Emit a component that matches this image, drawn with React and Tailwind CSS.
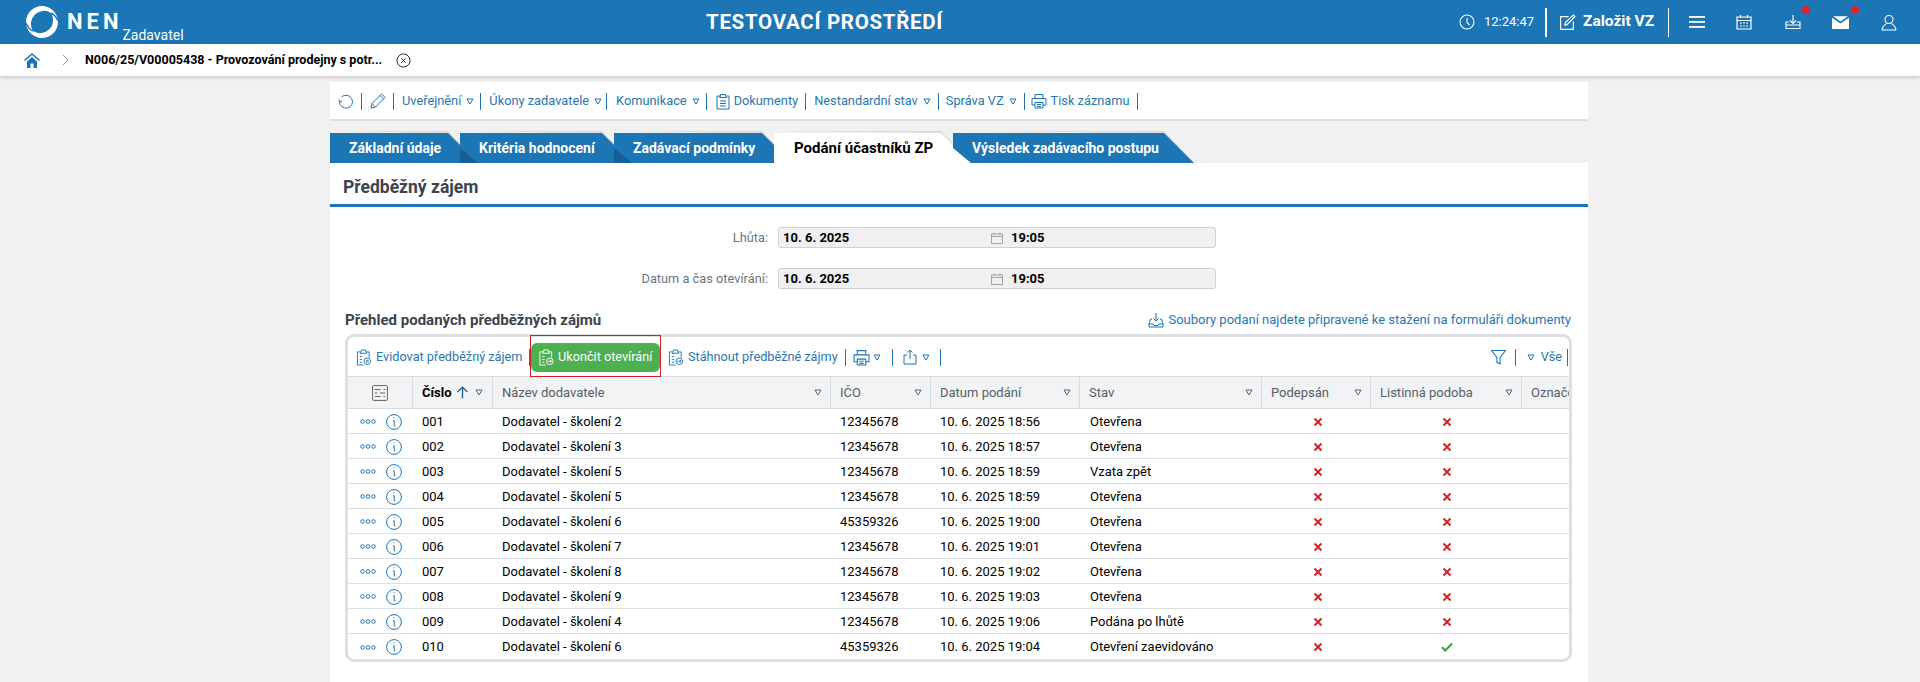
import React from 'react';

const B = '#1c75b4';

const Tri = ({ c = 'text-[#1c75b4]', className = '' }) => (
  <svg viewBox="0 0 8 7" className={`w-[8px] h-[7px] ${c} ${className} shrink-0`} fill="none" stroke="currentColor" strokeWidth="1"><path d="M1 1h6L4 6z" /></svg>
);
const Sep = ({ className = '' }) => <span className={`w-px h-[17px] bg-[#1c75b4] shrink-0 ${className}`} />;
const Clip = ({ kind, className = 'w-[15px] h-[17px] text-[#1c75b4]' }) => (
  <svg viewBox="0 0 16 18" className={`${className} shrink-0`} fill="none" stroke="currentColor" strokeWidth="1">
    <path d="M5 3H1.500v14H8M11 3h3v6" />
    <path d="M5.500 3V1h5V3l1 1.500h-7z" />
    <path d="M4 8h2.500M4 11h2.500M4 14h2.500" />
    <circle cx="12" cy="13" r="3.500" />
    {kind === 'gear' ? <circle cx="12" cy="13" r="1.200" /> : <path d="M9.800 13h4.200M12.500 11.500l1.500 1.500-1.500 1.500" />}
  </svg>
);
const Printer = ({ className }) => (
  <svg viewBox="0 0 16 16" className={`${className} shrink-0`} fill="none" stroke={B} strokeWidth="1"><path d="M4 5V1.500h8V5M4 12H1V5.500h14V12h-3M4 9.500h8v5.500H4zM6 11.500h4M6 13.500h4" /></svg>
);
const TabShape = ({ w, active }) => (
  <svg width={w + 18} height="32" className="absolute left-0 -top-[2px] overflow-visible">
    <path d={`M2 0H${w - 12}L${w + 18} 32H${w - 2}L${w - 12} 2z`} fill="#dadada" />
    <path d={`M0 2H${w - 12}L${w + 18} 32H0z`} fill={active ? '#ffffff' : B} />
  </svg>
);
const TabItem = ({ children, w, wc, active, prev, z }) => (
  <div className={`relative h-[30px] ${wc} ${z} shrink-0`}>
    <TabShape w={w} active={active} />
    {prev && (
      <svg width="18" height="15" className="absolute left-0 bottom-0">
        <path d="M0 0L18 15H0z" fill={prev === 'white' ? '#ffffff' : '#165f95'} />
      </svg>
    )}
    <span className={`relative h-full flex items-center font-bold whitespace-nowrap ${active ? 'pl-[20px] text-[15px] text-black' : 'pl-[19px] text-[14px] text-white'}`}>{children}</span>
  </div>
);
const Field = ({ label, className = '' }) => (
  <div className={`flex items-center h-[21px] ${className}`}>
    <div className="w-[448px] pr-[10px] text-right text-[12.800px] text-[#6a7580]">{label}</div>
    <div className="w-[438px] h-[21px] bg-[#f0f0f0] border border-[#d0d0d0] rounded-[3px] flex items-center pl-[4px] text-[13px] font-bold text-black">
      <span className="w-[208px]">10. 6. 2025</span>
      <svg viewBox="0 0 12 12" className="w-[12px] h-[12px] text-[#8a949c]" fill="none" stroke="currentColor" strokeWidth="0.8"><path d="M.5 2h11v9.500H.5zM.5 4.500h11M3 .5v2.500M9 .5v2.500" /></svg>
      <span className="ml-[8px]">19:05</span>
    </div>
  </div>
);
const HeadCell = ({ w, children, bold, sort, noTri }) => (
  <div className={`${w} shrink-0 h-full border-r border-[#d8dce0] flex items-center pl-[9px] pr-[8px] text-[13px] ${bold ? 'font-bold text-black' : 'text-[#56606a]'}`}>
    <span className="whitespace-nowrap">{children}</span>
    {sort && (
      <svg viewBox="0 0 12 12" className="ml-[4px] w-[13px] h-[13px] shrink-0" fill="none" stroke="#1f5f92" strokeWidth="1.200"><path d="M6 11.500V1M1.500 5.500L6 1l4.500 4.500" /></svg>
    )}
    {!noTri && <span className={sort ? 'ml-[6px]' : 'ml-auto'}><Tri c="text-[#5a6570]" /></span>}
  </div>
);
const rows = [
  ['001', 'Dodavatel - školení 2', '12345678', '10. 6. 2025 18:56', 'Otevřena'],
  ['002', 'Dodavatel - školení 3', '12345678', '10. 6. 2025 18:57', 'Otevřena'],
  ['003', 'Dodavatel - školení 5', '12345678', '10. 6. 2025 18:59', 'Vzata zpět'],
  ['004', 'Dodavatel - školení 5', '12345678', '10. 6. 2025 18:59', 'Otevřena'],
  ['005', 'Dodavatel - školení 6', '45359326', '10. 6. 2025 19:00', 'Otevřena'],
  ['006', 'Dodavatel - školení 7', '12345678', '10. 6. 2025 19:01', 'Otevřena'],
  ['007', 'Dodavatel - školení 8', '12345678', '10. 6. 2025 19:02', 'Otevřena'],
  ['008', 'Dodavatel - školení 9', '12345678', '10. 6. 2025 19:03', 'Otevřena'],
  ['009', 'Dodavatel - školení 4', '12345678', '10. 6. 2025 19:06', 'Podána po lhůtě'],
  ['010', 'Dodavatel - školení 6', '45359326', '10. 6. 2025 19:04', 'Otevření zaevidováno'],
];
const X = () => (
  <svg viewBox="0 0 10 10" className="w-[10px] h-[10px]" fill="none" stroke="#d3232a" strokeWidth="2"><path d="M1.500 1.500l7 7M8.500 1.500l-7 7" /></svg>
);
const Check = () => (
  <svg viewBox="0 0 12 10" className="w-[12px] h-[10px]" fill="none" stroke="#35a035" strokeWidth="2"><path d="M1 5.200L4.300 8.500 11 1.500" /></svg>
);
const Row = ({ r, last }) => (
  <div className={`h-[25px] shrink-0 flex items-center pt-[1px] text-[13px] text-black ${last ? '' : 'border-b border-[#dcdfe3]'}`}>
    <div className="w-[65px] shrink-0 flex items-center pl-[12px] gap-[10px]">
      <svg viewBox="0 0 16 5" className="w-[16px] h-[5px]" fill="none" stroke={B} strokeWidth="1"><circle cx="2.500" cy="2.500" r="1.800" /><circle cx="8" cy="2.500" r="1.800" /><circle cx="13.500" cy="2.500" r="1.800" /></svg>
      <svg viewBox="0 0 16 16" className="w-[16px] h-[16px]" fill="none" stroke={B} strokeWidth="1"><circle cx="8" cy="8" r="7.400" /><path d="M7.500 3.800h1M7 6.800h1.200v5h1.200" /></svg>
    </div>
    <div className="w-[80px] shrink-0 pl-[9px]">{r[0]}</div>
    <div className="w-[338px] shrink-0 pl-[9px]">{r[1]}</div>
    <div className="w-[100px] shrink-0 pl-[9px]">{r[2]}</div>
    <div className="w-[149px] shrink-0 pl-[9px]">{r[3]}</div>
    <div className="w-[182px] shrink-0 pl-[10px]">{r[4]}</div>
    <div className="w-[109px] shrink-0 flex justify-center pl-[3px]"><X /></div>
    <div className="w-[151px] shrink-0 flex justify-center pl-[1px]">{last ? <Check /> : <X />}</div>
  </div>
);

export default function App() {
  return (
    <div className="relative w-[1920px] h-[682px] overflow-hidden bg-[#f1f1f1] flex flex-col font-['Roboto',sans-serif]">
      <header className="h-[44px] bg-[#1c75b4] flex items-center shrink-0 text-white">
        <div className="w-[190px] shrink-0 flex h-full pl-[26px] items-center">
          <svg viewBox="0 0 32 32" className="w-[32px] h-[32px] shrink-0">
            <circle cx="16" cy="16" r="16" fill="white" />
            <path d="M7 25A13 13 0 0 1 25 7A13 13 0 0 1 7 25Z" fill={B} />
            <path d="M25 7Q29.500 9 32 15M7 25Q2.500 23 0 17" fill="none" stroke={B} strokeWidth="1.400" />
          </svg>
          <span className="ml-[9px] text-[22px] font-bold tracking-[4px] leading-none">NEN</span>
          <span className="self-end mb-[1px] text-[14px] leading-[16px]">Zadavatel</span>
        </div>
        <div className="flex-1 text-center text-[20.5px] font-bold tracking-[0.7px]">TESTOVACÍ PROSTŘEDÍ</div>
        <div className="flex items-center h-full pr-[23px] shrink-0">
          <svg viewBox="0 0 16 16" className="w-[16px] h-[16px]" fill="none" stroke="white" strokeWidth="1.100"><circle cx="8" cy="8" r="7" /><path d="M8 4v4.500l2.500 2.500" /></svg>
          <span className="ml-[9px] text-[13px] w-[49px]">12:24:47</span>
          <span className="ml-[12px] w-[2px] h-[29px] bg-white" />
          <svg viewBox="0 0 16 16" className="ml-[12px] w-[17px] h-[17px]" fill="none" stroke="white" strokeWidth="1.100"><path d="M9 2.500H1.500v12h12V7M6 8l7.500-7 1.500 1.500L7.500 10 5.500 10.500z" /></svg>
          <span className="ml-[7px] text-[15.500px] font-bold w-[71px] whitespace-nowrap">Založit VZ</span>
          <span className="ml-[14px] w-[1px] h-[29px] bg-white" />
          <svg viewBox="0 0 16 12" className="ml-[20px] w-[16px] h-[12px]" fill="white"><rect width="16" height="1.800" /><rect y="5" width="16" height="1.800" /><rect y="10" width="16" height="1.800" /></svg>
          <svg viewBox="0 0 16 16" className="ml-[31px] w-[16px] h-[16px]" fill="none" stroke="white" strokeWidth="1.200"><path d="M1 3h14v12H1zM1 6.500h14M4.500 1v3M11.500 1v3M4 9h2M7 9h2M10 9h2M4 12h2M7 12h2M10 12h2" /></svg>
          <div className="relative ml-[33px] w-[16px] h-[16px]">
            <svg viewBox="0 0 16 16" className="w-full h-full" fill="none" stroke="white" strokeWidth="1.100"><path d="M8 1v8M5 6.500L8 9.500l3-3M4 8H1v6.500h14V8h-3M1 11h14" /></svg>
            <span className="absolute -top-[8px] -right-[9px] w-[8px] h-[8px] rounded-full bg-[#e0202a]" />
          </div>
          <div className="relative ml-[31px] w-[17px] h-[13px]">
            <svg viewBox="0 0 16 12" className="w-full h-full" fill="white"><path d="M0 1.500L8 7l8-5.500V12H0zM1 0h14L8 5z" /></svg>
            <span className="absolute -top-[10px] -right-[10px] w-[8px] h-[8px] rounded-full bg-[#e0202a]" />
          </div>
          <svg viewBox="0 0 16 16" className="ml-[32px] w-[16px] h-[17px]" fill="none" stroke="white" strokeWidth="1.100"><circle cx="8" cy="5" r="4" /><path d="M1 15.500c.5-4 3-5.500 4.500-6.500M15 15.500c-.5-4-3-5.500-4.500-6.500M1 15.500h14" /></svg>
        </div>
      </header>
      <div className="h-[32px] bg-white flex items-center shrink-0 shadow-[0_2px_4px_rgba(0,0,0,0.14)] relative z-30">
        <svg viewBox="0 0 16 15" className="ml-[24px] w-[16px] h-[15px]" fill={B}><path d="M8 0L0 7l1 1 7-6 7 6 1-1zM3 8.500L8 4l5 4.500V15H9.500V10.500h-3V15H3z" /></svg>
        <svg viewBox="0 0 7 12" className="ml-[22px] w-[7px] h-[12px]" fill="none" stroke="#8a8a8a" strokeWidth="0.9"><path d="M1 1l5 5-5 5" /></svg>
        <span className="ml-[16px] w-[298px] text-[12.500px] font-bold text-black whitespace-nowrap">N006/25/V00005438 - Provozování prodejny s potr...</span>
        <svg viewBox="0 0 16 16" className="ml-[13px] w-[15px] h-[15px]" fill="none" stroke="#222" strokeWidth="1"><circle cx="8" cy="8" r="7" /><path d="M5.700 5.700l4.600 4.600M10.300 5.700l-4.600 4.600" /></svg>
      </div>
      <main className="ml-[330px] w-[1258px] flex-1 flex flex-col">
        <div className="mt-[6px] h-[39px] shrink-0 bg-white border-b-2 border-[#dedede] flex items-center pt-[1px] pl-[8px] text-[12.800px] text-[#2a76b2] whitespace-nowrap">
          <svg viewBox="0 0 16 16" className="w-[16px] h-[16px] shrink-0" fill="none" stroke={B} strokeWidth="1"><path d="M3.500 4A6.500 6.500 0 1 1 1.500 8.500M1 6.500L1.500 9 4 8" /></svg>
          <Sep className="ml-[7px]" />
          <svg viewBox="0 0 16 16" className="ml-[8px] w-[16px] h-[16px] shrink-0" fill="none" stroke={B} strokeWidth="1"><path d="M1 15l1-4.500L11.500 1 15 4.500 5.500 14zM2 10.500L5.500 14M10 2.500l3.500 3.500" /></svg>
          <Sep className="ml-[7px]" />
          <span className="ml-[8px]">Uveřejnění</span><Tri className="ml-[5px]" /><Sep className="ml-[6px]" />
          <span className="ml-[8px]">Úkony zadavatele</span><Tri className="ml-[5px]" /><Sep className="ml-[4px]" />
          <span className="ml-[9px]">Komunikace</span><Tri className="ml-[5px]" /><Sep className="ml-[6px]" />
          <svg viewBox="0 0 14 17" className="ml-[9px] w-[14px] h-[17px] shrink-0" fill="none" stroke={B} strokeWidth="1"><path d="M4 3H1v13h12V3h-3M4.500 3V1.500h5V3l1 1.500h-7zM4 8h6M4 10.500h6M4 13h6" /></svg>
          <span className="ml-[4px]">Dokumenty</span><Sep className="ml-[7px]" />
          <span className="ml-[8px]">Nestandardní stav</span><Tri className="ml-[5px]" /><Sep className="ml-[7px]" />
          <span className="ml-[7px]">Správa VZ</span><Tri className="ml-[5px]" /><Sep className="ml-[7px]" />
          <Printer className="ml-[6px] w-[16px] h-[16px]" />
          <span className="ml-[4px]">Tisk záznamu</span><Sep className="ml-[7px]" />
        </div>
        <div className="mt-[12px] h-[30px] shrink-0 flex relative">
          <TabItem w={130} wc="w-[130px]" z="z-[1]">Základní údaje</TabItem>
          <TabItem w={154} wc="w-[154px]" z="z-[2]" prev="blue">Kritéria hodnocení</TabItem>
          <TabItem w={160} wc="w-[160px]" z="z-[3]" prev="blue">Zadávací podmínky</TabItem>
          <TabItem w={179} wc="w-[179px]" z="z-[4]" active>Podání účastníků ZP</TabItem>
          <TabItem w={223} wc="w-[223px]" z="z-[5]" prev="white">Výsledek zadávacího postupu</TabItem>
        </div>
        <section className="relative z-10 bg-white flex-1 flex flex-col">
          <div className="h-[44px] shrink-0 border-b-[3px] border-[#1c75b4] flex items-center pl-[13px] pt-[7px] text-[17.500px] font-bold text-[#3a444e]">Předběžný zájem</div>
          <Field label="Lhůta:" className="mt-[20px]" />
          <Field label="Datum a čas otevírání:" className="mt-[20px]" />
          <div className="mt-[22px] flex items-center justify-between pl-[15px] pr-[17px] h-[18px] shrink-0">
            <span className="text-[15px] font-bold text-[#3a444e]">Přehled podaných předběžných zájmů</span>
            <span className="flex items-center gap-[4px] text-[13px] text-[#2a76b2]">
              <svg viewBox="0 0 16 16" className="w-[16px] h-[16px]" fill="none" stroke={B} strokeWidth="1"><path d="M8 1v8M5.500 6.500L8 9l2.500-2.500M4 7H2.500L1 12v3h14v-3l-1.500-5H12M1 12h4l1 1.500h4L11 12h4" /></svg>
              Soubory podaní najdete připravené ke stažení na formuláři dokumenty
            </span>
          </div>
          <div className="mt-[5px] ml-[15px] w-[1227px] h-[328px] shrink-0 border-[3px] border-[#dedfe1] rounded-[9px] overflow-hidden flex flex-col">
            <div className="h-[39px] shrink-0 flex items-center pt-[1px] pl-[8px] text-[12.700px] text-[#2a76b2] whitespace-nowrap">
              <Clip kind="gear" />
              <span className="ml-[5px] w-[146px]">Evidovat předběžný zájem</span>
              <Sep className="ml-[7px]" />
              <span className="ml-[1px] h-[29px] w-[129px] bg-[#4caf50] rounded-[6px] flex items-center pl-[7px] text-white">
                <Clip className="w-[16px] h-[17px] text-white" /><span className="ml-[4px]">Ukončit otevírání</span>
              </span>
              <span className="ml-[8px]"><Clip kind="arrow" /></span>
              <span className="ml-[5px] w-[149px]">Stáhnout předběžné zájmy</span>
              <Sep className="ml-[8px]" />
              <Printer className="ml-[7px] w-[17px] h-[17px]" />
              <Tri className="ml-[3px]" />
              <Sep className="ml-[11px]" />
              <svg viewBox="0 0 14 16" className="ml-[10px] w-[14px] h-[16px] shrink-0" fill="none" stroke={B} strokeWidth="1"><path d="M7 10V1M4.500 3.500L7 1l2.500 2.500M4 6H1v9h12V6h-3" /></svg>
              <Tri className="ml-[5px]" />
              <Sep className="ml-[10px]" />
              <svg viewBox="0 0 14 14" className="ml-auto w-[15px] h-[15px] shrink-0" fill="none" stroke={B} strokeWidth="1"><path d="M.5 .5h13L8.500 7v6l-3-1.500V7z" /></svg>
              <Sep className="ml-[9px]" />
              <Tri className="ml-[11px]" />
              <span className="ml-[6px]">Vše</span>
              <Sep className="ml-[5px] mr-[1px]" />
            </div>
            <div className="h-[33px] shrink-0 flex bg-[#f2f3f4] border-t border-b border-[#d8dce0]">
              <div className="w-[65px] shrink-0 h-full border-r border-[#d8dce0] flex items-center justify-center">
                <svg viewBox="0 0 14 14" className="w-[16px] h-[16px]" fill="none" stroke="#555" strokeWidth="0.8"><rect x=".5" y=".5" width="13" height="13" rx="1" /><path d="M2.500 4h5M10 4h1.500M2.500 7h2M7 7h4.500M2.500 10h5M10 10h1.500" /></svg>
              </div>
              <HeadCell w="w-[80px]" bold sort>Číslo</HeadCell>
              <HeadCell w="w-[338px]">Název dodavatele</HeadCell>
              <HeadCell w="w-[100px]">IČO</HeadCell>
              <HeadCell w="w-[149px]">Datum podání</HeadCell>
              <HeadCell w="w-[182px]">Stav</HeadCell>
              <HeadCell w="w-[109px]">Podepsán</HeadCell>
              <HeadCell w="w-[151px]">Listinná podoba</HeadCell>
              <HeadCell w="w-[80px]" noTri>Označeno</HeadCell>
            </div>
            {rows.map((r, i) => <Row key={r[0]} r={r} last={i === rows.length - 1} />)}
          </div>
        </section>
      </main>
      <div className="absolute z-20 left-[530px] top-[335px] w-[131px] h-[42px] border border-[#d01f2a] pointer-events-none" />
    </div>
  );
}
